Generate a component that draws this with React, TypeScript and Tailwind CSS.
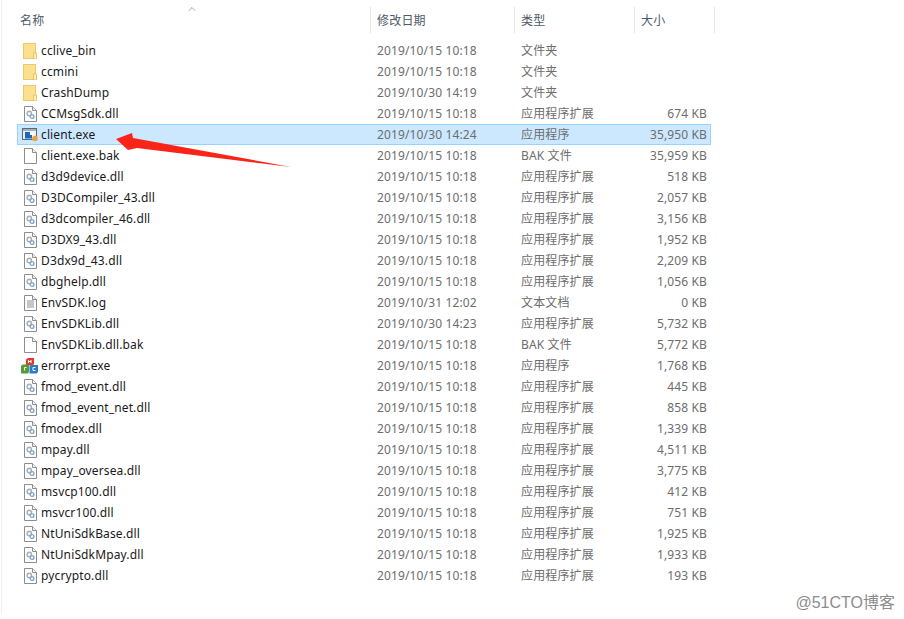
import { ChevronUp } from "lucide-react";

type Kind = "folder" | "dll" | "blank" | "exe" | "log" | "err";

const FILES: { name: string; date: string; type: string; size: string; kind: Kind; selected?: boolean }[] = [
  { name: "cclive_bin", date: "2019/10/15 10:18", type: "文件夹", size: "", kind: "folder" },
  { name: "ccmini", date: "2019/10/15 10:18", type: "文件夹", size: "", kind: "folder" },
  { name: "CrashDump", date: "2019/10/30 14:19", type: "文件夹", size: "", kind: "folder" },
  { name: "CCMsgSdk.dll", date: "2019/10/15 10:18", type: "应用程序扩展", size: "674 KB", kind: "dll" },
  { name: "client.exe", date: "2019/10/30 14:24", type: "应用程序", size: "35,950 KB", kind: "exe", selected: true },
  { name: "client.exe.bak", date: "2019/10/15 10:18", type: "BAK 文件", size: "35,959 KB", kind: "blank" },
  { name: "d3d9device.dll", date: "2019/10/15 10:18", type: "应用程序扩展", size: "518 KB", kind: "dll" },
  { name: "D3DCompiler_43.dll", date: "2019/10/15 10:18", type: "应用程序扩展", size: "2,057 KB", kind: "dll" },
  { name: "d3dcompiler_46.dll", date: "2019/10/15 10:18", type: "应用程序扩展", size: "3,156 KB", kind: "dll" },
  { name: "D3DX9_43.dll", date: "2019/10/15 10:18", type: "应用程序扩展", size: "1,952 KB", kind: "dll" },
  { name: "D3dx9d_43.dll", date: "2019/10/15 10:18", type: "应用程序扩展", size: "2,209 KB", kind: "dll" },
  { name: "dbghelp.dll", date: "2019/10/15 10:18", type: "应用程序扩展", size: "1,056 KB", kind: "dll" },
  { name: "EnvSDK.log", date: "2019/10/31 12:02", type: "文本文档", size: "0 KB", kind: "log" },
  { name: "EnvSDKLib.dll", date: "2019/10/30 14:23", type: "应用程序扩展", size: "5,732 KB", kind: "dll" },
  { name: "EnvSDKLib.dll.bak", date: "2019/10/15 10:18", type: "BAK 文件", size: "5,772 KB", kind: "blank" },
  { name: "errorrpt.exe", date: "2019/10/15 10:18", type: "应用程序", size: "1,768 KB", kind: "err" },
  { name: "fmod_event.dll", date: "2019/10/15 10:18", type: "应用程序扩展", size: "445 KB", kind: "dll" },
  { name: "fmod_event_net.dll", date: "2019/10/15 10:18", type: "应用程序扩展", size: "858 KB", kind: "dll" },
  { name: "fmodex.dll", date: "2019/10/15 10:18", type: "应用程序扩展", size: "1,339 KB", kind: "dll" },
  { name: "mpay.dll", date: "2019/10/15 10:18", type: "应用程序扩展", size: "4,511 KB", kind: "dll" },
  { name: "mpay_oversea.dll", date: "2019/10/15 10:18", type: "应用程序扩展", size: "3,775 KB", kind: "dll" },
  { name: "msvcp100.dll", date: "2019/10/15 10:18", type: "应用程序扩展", size: "412 KB", kind: "dll" },
  { name: "msvcr100.dll", date: "2019/10/15 10:18", type: "应用程序扩展", size: "751 KB", kind: "dll" },
  { name: "NtUniSdkBase.dll", date: "2019/10/15 10:18", type: "应用程序扩展", size: "1,925 KB", kind: "dll" },
  { name: "NtUniSdkMpay.dll", date: "2019/10/15 10:18", type: "应用程序扩展", size: "1,933 KB", kind: "dll" },
  { name: "pycrypto.dll", date: "2019/10/15 10:18", type: "应用程序扩展", size: "193 KB", kind: "dll" },
];

function FileIcon({ kind }: { kind: Kind }) {
  if (kind === "folder") {
    return (
      <svg width="14" height="16" viewBox="0 0 14 16">
        <rect x=".5" y=".5" width="12" height="15" fill="#fbe08e" stroke="#ecc873" />
        <path d="M10.5 10h3v6h-3z" fill="#fdf0bd" stroke="#e5b94f" strokeWidth=".8" />
      </svg>
    );
  }
  if (kind === "exe") {
    return (
      <svg width="17" height="14" viewBox="0 0 17 14">
        <rect x=".5" y=".5" width="14" height="11" fill="#eef2f6" stroke="#56677a" />
        <rect x="1" y="1" width="13" height="2" fill="#a3b0bd" />
        <rect x="3" y="4" width="7" height="6.5" fill="#1668c2" />
        <rect x="8" y="4" width="4" height="3" fill="#fff" />
        <circle cx="13" cy="10.5" r="2.8" fill="#e8a33a" />
      </svg>
    );
  }
  if (kind === "err") {
    return (
      <svg width="18" height="16" viewBox="0 0 18 16">
        <path d="M5 1.5 7 0h6v6l-1.5 1.5H5z" fill="#dd3b2c" />
        <path d="M0 8l1.5-1.5H8V14l-1 1.5H0z" fill="#569d39" />
        <path d="M8.5 8.5 10 7h7v7l-1.5 1.5h-7z" fill="#2a7ccb" />
        <path d="M7.5 2v3M10 2v3M7.5 3.5H10" stroke="#fff" />
        <path d="M5.5 9.5h-2v3" fill="none" stroke="#fff" />
        <path d="M14.5 9.5h-2.5v3h2.5" fill="none" stroke="#fff" />
      </svg>
    );
  }
  return (
    <svg width="13" height="16" viewBox="0 0 13 16">
      <path d="M.5.5h8l4 4v11H.5z" fill="#fff" stroke="#8d8d8d" />
      <path d="M8.5.5v4h4" fill="#f0f0f0" stroke="#8d8d8d" />
      {kind === "log" && <path d="M3 6h7M3 8h7M3 10h7M3 12h7" stroke="#8d8d8d" />}
      {kind === "dll" && (
        <g fill="none">
          <circle cx="5.3" cy="7.5" r="2.2" stroke="#a4adb6" strokeWidth="1.4" />
          <circle cx="8" cy="10.5" r="1.9" stroke="#7fa8cc" strokeWidth="1.4" />
        </g>
      )}
    </svg>
  );
}

const HEAD = "h-[26px] pt-[2px] flex items-center text-[12px] tracking-[0.2px] text-[#4d5a69] border-r border-[#e5e5e5]";

export default function App() {
  return (
    <div
      className="relative w-[904px] h-[619px] overflow-hidden bg-white"
      style={{ fontFamily: '"Noto Sans", "Noto Sans CJK SC", sans-serif' }}
    >
      <div className="ml-[1px] w-[800px] h-[615px] border-l border-[#eeeeee]">
        {/* Header */}
        <div className="grid grid-cols-[369px_144px_120px_80px] pt-[7px] h-[40px]">
          <div className={HEAD + " pl-[18px]"}>名称</div>
          <div className={HEAD + " pl-[6px]"}>修改日期</div>
          <div className={HEAD + " pl-[6px]"}>类型</div>
          <div className={HEAD + " pl-[6px]"}>大小</div>
        </div>

        {/* Rows */}
        <div className="w-[694px] ml-[15px]">
          {FILES.map((f) => (
            <div
              key={f.name}
              className={
                "grid grid-cols-[353px_144px_120px_75px] h-[21px] items-center text-[12px] tracking-[0.13px] border " +
                (f.selected ? "bg-[#cce8ff] border-[#99d1ff]" : "border-transparent")
              }
            >
              <div className="flex items-center text-[#1a1a1a]">
                <span className="w-[23px] flex justify-center pl-[1px]">
                  <FileIcon kind={f.kind} />
                </span>
                <span className="whitespace-nowrap">{f.name}</span>
              </div>
              <div className="pl-[6px] text-[#6d6d6d]">{f.date}</div>
              <div className="pl-[6px] text-[#6d6d6d]">{f.type}</div>
              <div className="pr-[3px] text-right text-[#6d6d6d]">{f.size}</div>
            </div>
          ))}
        </div>
      </div>

      {/* sort caret */}
      <ChevronUp className="absolute left-[186px] top-[3px] text-[#8a8a8a]" size={12} strokeWidth={1.5} />

      {/* red annotation arrow */}
      <svg className="absolute left-0 top-0" width="904" height="619" viewBox="0 0 904 619">
        <path d="M116 139 L132 133 L133 138 L291 167 L137 148 L128 150 Z" fill="#fb2418" />
      </svg>

      {/* watermark */}
      <div
        className="absolute right-[9px] top-[594px] text-[16px] leading-[18px] text-[#8c8c8c]"
        style={{ fontFamily: '"Liberation Sans", "Noto Sans CJK SC", sans-serif' }}
      >
        @51CTO博客
      </div>
    </div>
  );
}
